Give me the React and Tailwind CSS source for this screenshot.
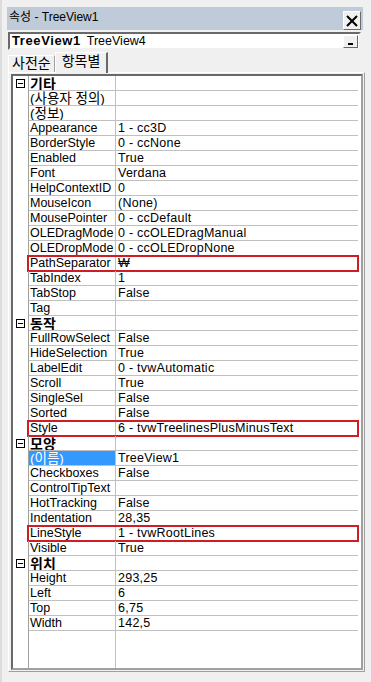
import React from "react";

const sections = [
  {
    title: "기타",
    rows: [
      ["(사용자 정의)", ""],
      ["(정보)", ""],
      ["Appearance", "1 - cc3D"],
      ["BorderStyle", "0 - ccNone"],
      ["Enabled", "True"],
      ["Font", "Verdana"],
      ["HelpContextID", "0"],
      ["MouseIcon", "(None)"],
      ["MousePointer", "0 - ccDefault"],
      ["OLEDragMode", "0 - ccOLEDragManual"],
      ["OLEDropMode", "0 - ccOLEDropNone"],
      ["PathSeparator", "₩", "mark"],
      ["TabIndex", "1"],
      ["TabStop", "False"],
      ["Tag", ""],
    ],
  },
  {
    title: "동작",
    rows: [
      ["FullRowSelect", "False"],
      ["HideSelection", "True"],
      ["LabelEdit", "0 - tvwAutomatic"],
      ["Scroll", "True"],
      ["SingleSel", "False"],
      ["Sorted", "False"],
      ["Style", "6 - tvwTreelinesPlusMinusText", "mark"],
    ],
  },
  {
    title: "모양",
    rows: [
      ["(이름)", "TreeView1", "selected"],
      ["Checkboxes", "False"],
      ["ControlTipText", ""],
      ["HotTracking", "False"],
      ["Indentation", "28,35"],
      ["LineStyle", "1 - tvwRootLines", "mark"],
      ["Visible", "True"],
    ],
  },
  {
    title: "위치",
    rows: [
      ["Height", "293,25"],
      ["Left", "6"],
      ["Top", "6,75"],
      ["Width", "142,5"],
    ],
  },
];

const isKorean = (s) => /[가-힣]/.test(s);

const MinusBox = () => (
  <svg width="9" height="9" viewBox="0 0 9 9" className="block">
    <rect x="0.5" y="0.5" width="8" height="8" fill="#fff" stroke="#000" />
    <line x1="2" y1="4.5" x2="7" y2="4.5" stroke="#000" />
  </svg>
);

const Row = ({ name, value, flag, header }) => (
  <div className="relative flex h-[15px]">
    <div className="w-[16px] shrink-0 flex items-center justify-center border-r border-[#a0a0a0]">
      {header && <MinusBox />}
    </div>
    <div
      className={`w-[87px] shrink-0 pl-[1px] border-r border-b border-[#c0c0c0] leading-[14px] whitespace-nowrap overflow-hidden ${
        flag === "selected" ? "bg-[#3399ff] text-white" : "text-black"
      }`}
    >
      <span
        className={`relative ${
          header ? "font-bold text-[14px] top-[1px]" : isKorean(name) ? "text-[13.5px] top-[1px]" : ""
        }`}
      >
        {name}
      </span>
    </div>
    <div className="flex-1 pl-[2px] border-b border-[#c0c0c0] leading-[14px] whitespace-nowrap tracking-[0.25px]">
      {value}
    </div>
    {flag === "mark" && (
      <div className="absolute left-[14px] right-[-1px] top-[-1px] bottom-[-1px] border-2 border-[#d01c24] pointer-events-none" />
    )}
  </div>
);

export default function App() {
  return (
    <div className="w-[371px] h-[682px] bg-[#f0f0f0] overflow-hidden relative font-['Liberation_Sans','Noto_Sans_CJK_KR',sans-serif] text-[12.5px] text-black border-l-2 border-[#dcdcdc]">
      {/* title bar */}
      <div className="mt-[7px] ml-[5px] w-[356px] h-[23px] bg-[#bfcbd8] flex items-center justify-between pl-[2px] pr-[2px]">
        <span className="text-[12px] leading-none mt-[-4px]">속성 - TreeView1</span>
        <div className="w-[18px] h-[19px] mt-[4px] bg-[#f0f0f0] border border-t-white border-l-white border-r-[#696969] border-b-[#696969] flex items-center justify-center">
          <svg width="12" height="12" viewBox="0 0 12 12">
            <path d="M1 1 L11 11 M11 1 L1 11" stroke="#000" strokeWidth="2" />
          </svg>
        </div>
      </div>

      {/* object combo */}
      <div className="mt-[2px] ml-[6px] w-[353px] h-[18px] bg-white border-2 border-t-[#696969] border-l-[#696969] border-r-[#f0f0f0] border-b-[#f0f0f0] flex items-center">
        <span className="ml-[2px] font-bold tracking-[0.6px] text-[13px]">TreeView1</span>
        <span className="ml-[6px]">TreeView4</span>
        <div className="ml-auto mr-[1px] w-[15px] h-[13px] bg-[#f0f0f0] border border-t-white border-l-white border-r-[#696969] border-b-[#696969] flex items-end justify-center pb-[2px]">
          <div className="w-[5px] h-[2px] bg-black" />
        </div>
      </div>

      {/* tabs */}
      <div className="mt-[2px] ml-[6px] flex items-end h-[20px]">
        <div className="h-[17px] px-[3px] border-l border-t border-white border-r border-r-[#a0a0a0] leading-[15px] text-[14px] bg-[#f0f0f0]">
          사전순
        </div>
        <div className="h-[21px] px-[6px] border-l border-t border-white border-r-2 border-r-[#696969] leading-[17px] text-[14px] bg-[#f0f0f0] relative top-[1px]">
          항목별
        </div>
      </div>

      {/* tab page */}
      <div className="ml-[6px] w-[357px] h-[600px] border border-l-white border-t-white border-r-[#a0a0a0] border-b-[#a0a0a0] pt-[1px] pl-[2px]">
        <div className="w-[352px] h-[596px] border-2 border-t-[#696969] border-l-[#696969] border-r-[#a0a0a0] border-b-[#a0a0a0] bg-white pr-[3px] flex flex-col">
          {sections.map((s) => (
            <React.Fragment key={s.title}>
              <Row name={s.title} value="" header />
              {s.rows.map(([n, v, f]) => (
                <Row key={n} name={n} value={v} flag={f} />
              ))}
            </React.Fragment>
          ))}
          <div className="flex flex-1">
            <div className="w-[16px] border-r border-[#a0a0a0]" />
            <div className="w-[87px] border-r border-[#c0c0c0]" />
          </div>
        </div>
      </div>
    </div>
  );
}
